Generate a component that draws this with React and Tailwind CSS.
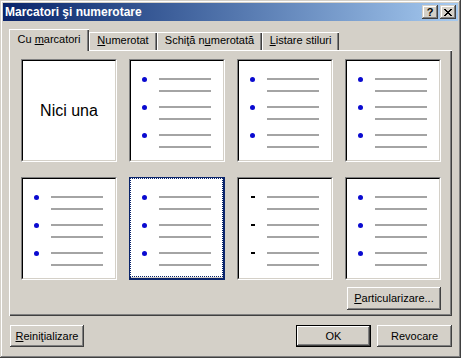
import React from "react";

const raised =
  "shadow-[inset_-1px_-1px_#404040,inset_1px_1px_#ffffff,inset_-2px_-2px_#808080]";
const frame =
  "shadow-[inset_-1px_-1px_#404040,inset_1px_1px_#d4d0c8,inset_-2px_-2px_#808080,inset_2px_2px_#ffffff]";

function Lines({ mark }) {
  return (
    <div className="flex flex-col gap-[14px] pt-[17px]">
      {[0, 1, 2].map((i) => (
        <div key={i} className="flex items-start">
          <div className="w-[28px] h-[2px] flex items-center pl-[11px]">
            {mark === "dash" ? (
              <div className="w-[4px] h-[2px] bg-black ml-[1px]" />
            ) : (
              <div className="w-[5px] h-[5px] shrink-0 rounded-full bg-[#0a0ad0]" />
            )}
          </div>
          <div className="flex flex-col gap-[10px]">
            <div className="w-[52px] h-[2px] bg-[#a4a4a4]" />
            <div className="w-[52px] h-[2px] bg-[#a4a4a4]" />
          </div>
        </div>
      ))}
    </div>
  );
}

function Card({ kind, selected }) {
  if (selected) {
    return (
      <div className="h-[103px] border-2 border-[#0a246a]">
        <div className="h-full border border-dotted border-[#0a246a] bg-white -mt-px -ml-px">
          <Lines mark={kind} />
        </div>
      </div>
    );
  }
  return (
    <div className="h-[103px] border border-t-[#808080] border-l-[#808080] border-b-white border-r-white">
      <div className="h-full border border-t-black border-l-black border-b-[#d4d0c8] border-r-[#d4d0c8] bg-white">
        {kind === "none" ? (
          <div className="h-full flex items-center justify-center text-[16px] text-black">
            Nici una
          </div>
        ) : (
          <Lines mark={kind} />
        )}
      </div>
    </div>
  );
}

function Tab({ children, width, active }) {
  if (active) {
    return (
      <div
        className={`${width} h-[22px] -mb-px bg-[#d4d0c8] flex justify-center pt-[5px] shadow-[inset_1px_1px_#ffffff,inset_-1px_0_#404040,inset_-2px_0_#808080]`}
      >
        {children}
      </div>
    );
  }
  return (
    <div
      className={`${width} h-[18px] bg-[#d4d0c8] flex justify-center pt-[3px] shadow-[inset_1px_1px_#ffffff,inset_-1px_0_#404040,inset_-2px_0_#808080]`}
    >
      {children}
    </div>
  );
}

function Button({ children, width, isDefault }) {
  const inner = (
    <div
      className={`${isDefault ? "w-full h-full" : width + " h-full"} bg-[#d4d0c8] flex items-center justify-center text-[11px] text-black ${raised}`}
    >
      {children}
    </div>
  );
  if (isDefault) {
    return <div className={`${width} h-full border border-black`}>{inner}</div>;
  }
  return inner;
}

export default function App() {
  const cards = [
    { kind: "none" },
    { kind: "dot" },
    { kind: "dot" },
    { kind: "dot" },
    { kind: "dot" },
    { kind: "dot", selected: true },
    { kind: "dash" },
    { kind: "dot" },
  ];

  return (
    <div
      className={`w-[461px] h-[358px] bg-[#d4d0c8] p-[3px] flex flex-col font-['Liberation_Sans',Arial,sans-serif] text-[11px] leading-none select-none ${frame}`}
    >
      {/* title bar */}
      <div className="h-[18px] bg-linear-to-r from-[#0a246a] to-[#a6caf0] flex items-center pl-[2px] pr-[2px]">
        <span className="text-white font-bold text-[12px] flex-1">Marcatori şi numerotare</span>
        <div className="flex gap-[2px]">
          <div className={`w-[16px] h-[14px] bg-[#d4d0c8] flex items-center justify-center font-bold text-[11px] text-black ${frame}`}>
            ?
          </div>
          <div className={`w-[16px] h-[14px] bg-[#d4d0c8] flex items-center justify-center ${frame}`}>
            <svg width="8" height="7" viewBox="0 0 8 7">
              <path d="M0 0h2v1h1v1h2V1h1V0h2v1H7v1H6v1H5v1h1v1h1v1h1v1H6V6H5V5H3v1H2v1H0V6h1V5h1V4h1V3H2V2H1V1H0z" fill="#000" />
            </svg>
          </div>
        </div>
      </div>

      <div className="flex flex-col px-[6px] pt-[8px]">
        {/* tabs */}
        <div className="h-[21px] flex items-end relative z-10 text-black">
          <Tab width="w-[80px]" active>
            <span>
              Cu <span className="underline">m</span>arcatori
            </span>
          </Tab>
          <Tab width="w-[68px]">
            <span>
              <span className="underline">N</span>umerotat
            </span>
          </Tab>
          <Tab width="w-[105px]">
            <span>
              Schiţă n<span className="underline">u</span>merotată
            </span>
          </Tab>
          <Tab width="w-[77px]">
            <span>
              <span className="underline">L</span>istare stiluri
            </span>
          </Tab>
        </div>

        {/* tab body */}
        <div className="h-[266px] pt-[9px] pl-[12px] pr-[11px] pb-[6px] flex flex-col shadow-[inset_1px_1px_#ffffff,inset_-1px_-1px_#404040,inset_-2px_-2px_#808080]">
          <div className="grid grid-cols-[repeat(4,96px)] gap-x-[12px] gap-y-[15px]">
            {cards.map((c, i) => (
              <Card key={i} kind={c.kind} selected={c.selected} />
            ))}
          </div>
          <div className="flex justify-end mt-[7px] h-[23px]">
            <Button width="w-[94px]">
              <span>
                <span className="underline">P</span>articularizare...
              </span>
            </Button>
          </div>
        </div>

        {/* bottom buttons */}
        <div className="flex justify-between mt-[9px] h-[22px]">
          <div className="ml-px h-full">
            <Button width="w-[74px]">
              <span>
                <span className="underline">R</span>einiţializare
              </span>
            </Button>
          </div>
          <div className="flex gap-[6px] h-full">
            <Button width="w-[75px]" isDefault>
              OK
            </Button>
            <Button width="w-[75px]">Revocare</Button>
          </div>
        </div>
      </div>
    </div>
  );
}
